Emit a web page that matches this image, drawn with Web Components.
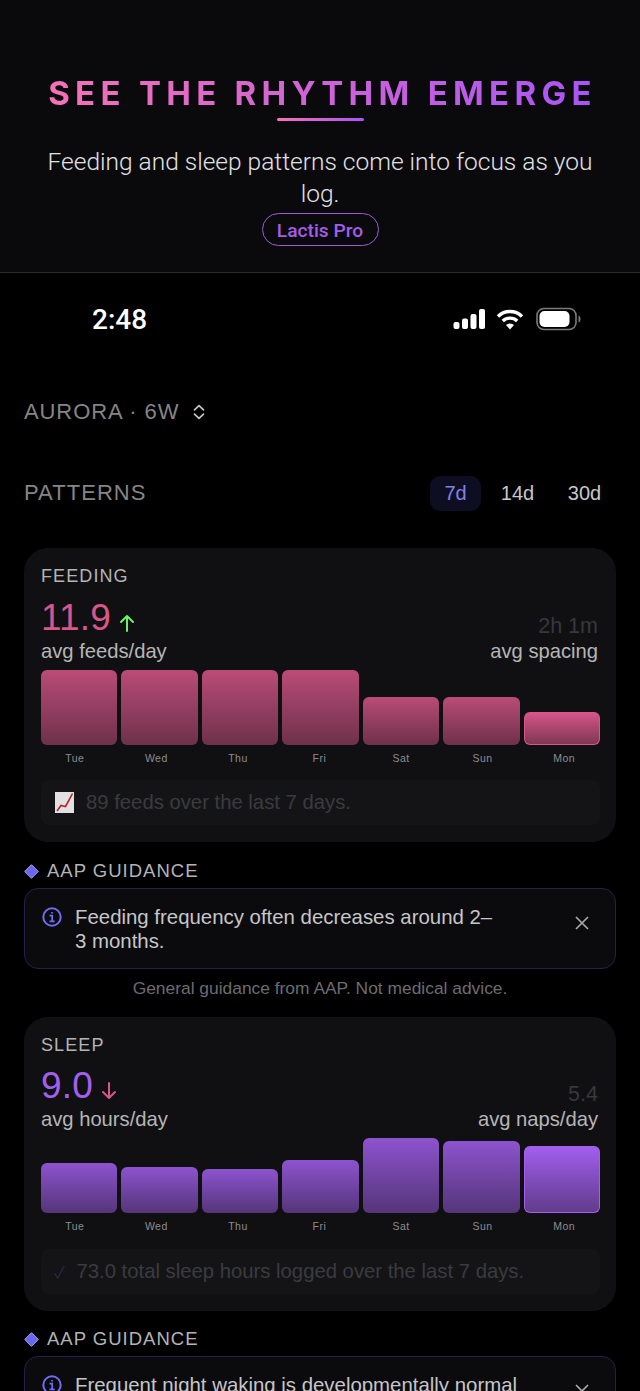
<!DOCTYPE html>
<html lang="en">
<head>
<meta charset="utf-8">
<title>Patterns</title>
<style>
  html, body { margin: 0; background: #000; }
  body { width: 640px; height: 1391px; overflow: hidden; font-family: "Liberation Sans", Arial, sans-serif; }
  .content { display: flex; flex-direction: column; padding: 0 24px; }
</style>
</head>
<body>
<promo-header></promo-header>
<status-bar></status-bar>
<div class="content">
  <baby-switch>AURORA · 6W</baby-switch>
  <range-head></range-head>
  <metric-card title="FEEDING" value="11.9" trend="up" unit="avg feeds/day" side="2h 1m" sidelabel="avg spacing"
    color="#d9568a" bars="75,75,75,75,48,48,33" icon="chart" summary="89 feeds over the last 7 days."></metric-card>
  <guidance-note top="18" textwidth="425" text="Feeding frequency often decreases around 2–3 months." disclaimer="General guidance from AAP. Not medical advice."></guidance-note>
  <metric-card style="--stats-gap:9px;--summary-gap:16px" title="SLEEP" value="9.0" trend="down" unit="avg hours/day" side="5.4" sidelabel="avg naps/day"
    color="#a35ff0" bars="50,46,44,53,75,72,67" icon="check" summary="73.0 total sleep hours logged over the last 7 days."></metric-card>
  <guidance-note top="17" textwidth="450" text="Frequent night waking is developmentally normal at this age."></guidance-note>
</div>
<script>
class PromoHeader extends HTMLElement {
  constructor() {
    super();
    this.attachShadow({ mode: "open" }).innerHTML = `
    <style>
      :host { display: flex; flex-direction: column; align-items: center; height: 272px; background: #0a0a0d; border-bottom: 1px solid #2b2b2e; }
      h1 { margin: 75px -5px 0 0; font: 700 33px/36px Inter, sans-serif; letter-spacing: 5.3px; white-space: nowrap;
        background: linear-gradient(90deg, #f472b6, #a855f7); -webkit-background-clip: text; background-clip: text; color: transparent; }
      .rule { width: 87px; height: 3px; margin-top: 7px; border-radius: 2px; background: linear-gradient(90deg, #f472b6, #a855f7); }
      p { margin: 25px 0 0; width: 570px; text-align: center; font: 300 24.5px/32px Roboto, sans-serif; color: #e2e2e4; }
      .pill { margin-top: 3px; box-sizing: border-box; width: 117px; height: 33px; padding-top: 2px; display: flex; align-items: center; justify-content: center;
        border: 1.5px solid #9d5bd8; border-radius: 17px; font: 500 19.2px Roboto, sans-serif; color: #a55ce8; }
    </style>
    <h1>SEE THE RHYTHM EMERGE</h1>
    <div class="rule"></div>
    <p>Feeding and sleep patterns come into focus as you log.</p>
    <div class="pill">Lactis Pro</div>`;
  }
}
customElements.define("promo-header", PromoHeader);

class StatusBar extends HTMLElement {
  constructor() {
    super();
    this.attachShadow({ mode: "open" }).innerHTML = `
    <style>
      :host { display: flex; align-items: center; justify-content: space-between; height: 92px; padding: 0 59px 0 92px; color: #fff; }
      .time { font: 500 28px Roboto, sans-serif; }
      .icons { display: flex; align-items: center; gap: 11px; }
      .icons svg:first-child { margin-right: -1px; }
      .icons svg:last-child { margin-left: 1px; }
      svg { display: block; }
    </style>
    <span class="time">2:48</span>
    <div class="icons">
      <svg width="33" height="22" viewBox="0 0 33 22" fill="#fff">
        <rect x="0.5" y="14" width="6" height="7" rx="2"/><rect x="9" y="10.5" width="6" height="10.5" rx="2"/>
        <rect x="17.5" y="6" width="6" height="15" rx="2"/><rect x="26" y="1" width="6" height="20" rx="2"/>
      </svg>
      <svg width="28" height="22" viewBox="0 0 28 22" fill="none" stroke="#fff" stroke-width="3.4">
        <path d="M2 8.5a17 17 0 0 1 24 0"/><path d="M6.8 13a10.5 10.5 0 0 1 14.4 0"/>
        <path d="M14 21.5l-4-4.4a5.8 5.8 0 0 1 8 0z" fill="#fff" stroke="none"/>
      </svg>
      <svg width="45" height="24" viewBox="0 0 45 24" fill="none">
        <rect x="1" y="1.5" width="39" height="21" rx="7" stroke="#7c7c7c" stroke-width="1.6"/>
        <rect x="3.5" y="4" width="30" height="16" rx="5" fill="#fff"/>
        <path d="M42.5 8.5c1.5.5 2 2 2 3.5s-.5 3-2 3.5z" fill="#7c7c7c"/>
      </svg>
    </div>`;
  }
}
customElements.define("status-bar", StatusBar);

class BabySwitch extends HTMLElement {
  constructor() {
    super();
    this.attachShadow({ mode: "open" }).innerHTML = `
    <style>
      :host { display: flex; align-items: center; gap: 14px; margin-top: 33px; height: 28px; font-size: 22px;
        letter-spacing: .9px; color: #858585; }
      svg { display: block; }
    </style>
    <slot></slot>
    <svg width="12" height="16" viewBox="0 0 12 16" fill="none" stroke="#c4c4c4" stroke-width="1.7" stroke-linecap="round" stroke-linejoin="round">
      <path d="M1.5 5.8 6 1.6l4.5 4.2"/><path d="M1.5 10.2 6 14.4l4.5-4.2"/>
    </svg>`;
  }
}
customElements.define("baby-switch", BabySwitch);

class RangeHead extends HTMLElement {
  constructor() {
    super();
    this.attachShadow({ mode: "open" }).innerHTML = `
    <style>
      :host { display: flex; align-items: center; justify-content: space-between; height: 36px; margin: 49px 0 37px; }
      .label { font-size: 22px; letter-spacing: 1.05px; color: #858585; }
      .tabs { display: flex; align-items: center; margin-right: -2px; font-size: 20px; color: #c8c8c8; }
      .tabs span { width: 67px; text-align: center; }
      .tabs .on { width: 51px; height: 35px; line-height: 35px; margin-right: 3px; border-radius: 10px; background: #0e0e22; color: #7f83ea; }
    </style>
    <span class="label">PATTERNS</span>
    <div class="tabs"><span class="on">7d</span><span>14d</span><span>30d</span></div>`;
  }
}
customElements.define("range-head", RangeHead);

class BarChart extends HTMLElement {
  connectedCallback() {
    const days = ["Tue", "Wed", "Thu", "Fri", "Sat", "Sun", "Mon"];
    const heights = this.getAttribute("bars").split(",");
    const color = this.getAttribute("color");
    const last = heights.length - 1;
    this.attachShadow({ mode: "open" }).innerHTML = `
    <style>
      :host { display: block; }
      .bars { display: grid; grid-template-columns: repeat(7, 1fr); gap: 4px; align-items: end; height: 75px; }
      .bar { box-sizing: border-box; border-radius: 6px; opacity: .85;
        background: linear-gradient(180deg, ${color}, color-mix(in srgb, ${color} 55%, #111)); }
      .bar.today { opacity: 1; border: 1.5px solid ${color}; border-top: 0; }
      .days { display: grid; grid-template-columns: repeat(7, 1fr); margin: 7px -5px 0 -7px; font-size: 10.5px; line-height: 13px;
        letter-spacing: .5px; color: #8d8d8f; text-align: center; }
    </style>
    <div class="bars">${heights.map((h, i) => `<div class="bar${i === last ? " today" : ""}" style="height:${h}px"></div>`).join("")}</div>
    <div class="days">${days.map(d => `<span>${d}</span>`).join("")}</div>`;
  }
}
customElements.define("bar-chart", BarChart);

class MetricCard extends HTMLElement {
  connectedCallback() {
    const a = n => this.getAttribute(n);
    const up = a("trend") === "up";
    const icons = {
      chart: `<svg width="19" height="21" viewBox="0 0 19 21"><rect width="19" height="21" fill="#e2e0e0"/>
        <path d="M2 19 6 13.5l4.5 1L13 10l4.5-8.5" fill="none" stroke="#b02a2a" stroke-width="1.6"/></svg>`,
      check: `<svg width="11" height="14" viewBox="0 0 11 14" fill="none" stroke="#2a2850" stroke-width="1.2" style="margin-left:-1.5px"><path d="M.7 8.5 3.6 13 10.3 1"/></svg>`
    };
    this.attachShadow({ mode: "open" }).innerHTML = `
    <style>
      :host { display: block; box-sizing: border-box; padding: 17px 16px 17px 17px; border-radius: 24px; background: #101013; }
      .title { font-size: 18px; line-height: 22px; letter-spacing: 1.1px; color: #b4b4b4; }
      .stats { display: flex; justify-content: space-between; align-items: flex-end; margin: var(--stats-gap, 10px) 2px 0 0; }
      .value { display: flex; align-items: center; gap: 8px; height: 41px; font-size: 37px; color: ${a("color")}; letter-spacing: .2px; }
      .unit { font-size: 20.2px; line-height: 26px; color: #b6b6b6; }
      .right { text-align: right; }
      .side { font-size: 21.5px; line-height: 24px; color: #38383b; }
      svg { display: block; }
      bar-chart { margin-top: 6px; }
      .summary { display: flex; align-items: center; gap: 12px; height: 45px; margin-top: var(--summary-gap, 15px); padding-left: 14px; border-radius: 8px;
        background: #141417; font-size: 20.3px; color: #3b3b3f; white-space: nowrap; }
    </style>
    <div class="title">${a("title")}</div>
    <div class="stats">
      <div>
        <div class="value">${a("value")}
          <svg width="16" height="18" viewBox="0 0 16 18" fill="none" stroke="${up ? "#6cf06c" : "#d9568a"}" stroke-width="2" stroke-linecap="round" stroke-linejoin="round" style="margin-top:10px">
            <path d="${up ? "M8 17V2M2 8l6-6 6 6" : "M8 1v15M2 10l6 6 6-6"}"/>
          </svg>
        </div>
        <div class="unit">${a("unit")}</div>
      </div>
      <div class="right">
        <div class="side">${a("side")}</div>
        <div class="unit">${a("sidelabel")}</div>
      </div>
    </div>
    <bar-chart bars="${a("bars")}" color="${a("color")}"></bar-chart>
    <div class="summary">${icons[a("icon")]}<span>${a("summary")}</span></div>`;
  }
}
customElements.define("metric-card", MetricCard);

class GuidanceNote extends HTMLElement {
  connectedCallback() {
    const a = n => this.getAttribute(n);
    this.attachShadow({ mode: "open" }).innerHTML = `
    <style>
      :host { display: block; margin-top: ${a("top")}px; }
      .head { display: flex; align-items: center; gap: 8px; height: 22px; font-size: 18.5px; letter-spacing: 1px; color: #b4b4b4; }
      .box { display: flex; justify-content: space-between; box-sizing: border-box; height: 81px; margin-top: 6px; padding: 16px 26px 0 17px;
        border: 1px solid #23204a; border-radius: 14px; background: #0b0b0e; }
      .main { display: flex; gap: 13px; }
      .main p { width: ${a("textwidth")}px; margin: 0; font-size: 20.4px; line-height: 24px; color: #c6c6c8; }
      .disclaimer { margin-top: 8px; height: 40px; text-align: center; font-size: 17.4px; line-height: 22px; color: #6c6c70; }
      svg { display: block; flex: none; }
      .close { margin-top: 11px; }
    </style>
    <div class="head">
      <svg width="15" height="15" viewBox="0 0 15 15"><path d="M7.5.7 14.3 7.5 7.5 14.3.7 7.5z" fill="#6b66f0" stroke="#a5a3ee" stroke-width="1"/></svg>
      <span>AAP GUIDANCE</span>
    </div>
    <div class="box">
      <div class="main">
        <svg width="20" height="20" viewBox="0 0 20 20" fill="none" stroke="#6e6cf0" stroke-width="2" style="margin-top:2px">
          <circle cx="10" cy="10" r="8.7"/>
          <path d="M7.5 8.7H10.2V14M7.5 14.3H12.7M10 5V6.6" stroke-width="1.8"/>
        </svg>
        <p>${a("text")}</p>
      </div>
      <svg class="close" width="14" height="14" viewBox="0 0 14 14" fill="none" stroke="#a8a8aa" stroke-width="1.7"><path d="M1 1l12 12M13 1 1 13"/></svg>
    </div>
    ${a("disclaimer") ? `<div class="disclaimer">${a("disclaimer")}</div>` : ""}`;
  }
}
customElements.define("guidance-note", GuidanceNote);
</script>
</body>
</html>
